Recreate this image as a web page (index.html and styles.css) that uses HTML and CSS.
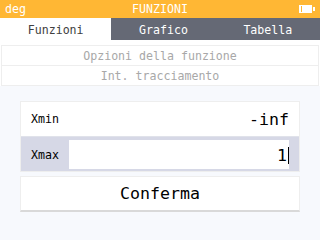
FILE: index.html
```html
<!DOCTYPE HTML>
<html>

<head>
  <title>Funzioni</title>
  <meta name="viewport" content="width=device-width, initial-scale=1.0">
  <link rel="stylesheet" href="styles.css">
</head>

<body>
  <div class="titlebar">
    <span class="angle">deg</span>
    <span class="title">FUNZIONI</span>
    <svg class="battery" width="16" height="8" viewBox="0 0 16 8">
      <rect x="0" y="0" width="2" height="8" fill="#fff" />
      <rect x="3" y="0" width="10" height="8" fill="#fff" />
      <rect x="0" y="0" width="13" height="1" fill="#fff" />
      <rect x="0" y="7" width="13" height="1" fill="#fff" />
      <rect x="14" y="2" width="2" height="4" fill="#fff" />
    </svg>
  </div>

  <!-- -------------------------------------------------------------------- -->

  <div class="tabs">
    <div class="tab active">Funzioni</div>
    <div class="tab">Grafico</div>
    <div class="tab">Tabella</div>
  </div>

  <!-- -------------------------------------------------------------------- -->

  <div class="menu">
    <div class="menu-row">Opzioni della funzione</div>
    <div class="menu-row">Int. tracciamento</div>
  </div>

  <div class="content">
    <div class="params">
      <div class="param">
        <span class="label">Xmin</span>
        <span class="value">-inf</span>
      </div>
      <div class="param editing">
        <span class="label">Xmax</span>
        <div class="field">1<span class="cursor"></span></div>
      </div>
    </div>
    <div class="confirm">Conferma</div>
  </div>
</body>

</html>
```

FILE: styles.css
```css
* {
  box-sizing: border-box;
}

html {
  font-family: "DejaVu Sans Mono", monospace;
}

body {
  margin: 0;
  width: 320px;
  height: 240px;
  overflow: hidden;
  background-color: #F7F9FD;
}

/* ------------------------------ TITLE BAR ---------------------------- */

.titlebar {
  position: relative;
  height: 18px;
  display: flex;
  align-items: center;
  justify-content: center;
  background-color: #FFB734;
  color: white;
  font-size: 11.6px;
}

.angle {
  position: absolute;
  left: 5px;
  top: 2px;
}

.battery {
  position: absolute;
  left: 299px;
  top: 5px;
}

/* -------------------------------- TABS ------------------------------- */

.tabs {
  display: flex;
  height: 22px;
  background-color: #656975;
  color: white;
  font-size: 11.6px;
}

.tab {
  flex: 1 1 auto;
  display: flex;
  align-items: center;
  justify-content: center;
  padding-top: 1px;
}

.tab.active {
  background-color: white;
  color: #404040;
}

/* -------------------------------- MENU ------------------------------- */

.menu {
  background-color: white;
  padding: 5px 1px 0;
}

.menu-row {
  height: 20px;
  border: 1px solid #EEEEEE;
  border-bottom: none;
  display: flex;
  align-items: center;
  justify-content: center;
  color: #A8A8A8;
  font-size: 11.6px;
}

.menu-row:last-child {
  height: 21px;
  border-bottom: 1px solid #EEEEEE;
}

/* ------------------------------- PARAMS ------------------------------ */

.content {
  padding: 15px 20px 0 20px;
}

.params {
  width: 280px;
  border: 1px solid #EEEEEE;
  background-color: white;
}

.param {
  height: 34px;
  display: flex;
  align-items: center;
  justify-content: space-between;
  padding: 0 10px;
  font-size: 11.6px;
  color: black;
}

.param + .param {
  height: 35px;
  border-top: 1px solid #E0E2EA;
}

.value {
  font-size: 16.6px;
  padding-top: 1px;
}

.param.editing {
  background-color: #D6D8E6;
  align-items: stretch;
  padding: 3px 10px 2px 10px;
}

.param.editing .label {
  display: flex;
  align-items: center;
  width: 38px;
}

.field {
  flex: 1;
  background-color: white;
  display: flex;
  align-items: center;
  justify-content: flex-end;
  font-size: 16.6px;
  padding-top: 1px;
}

.cursor {
  display: inline-block;
  width: 1px;
  height: 17px;
  margin-left: 1px;
  background-color: black;
}

/* ------------------------------- BUTTON ------------------------------ */

.confirm {
  width: 280px;
  height: 36px;
  margin-top: 4px;
  border: 1px solid #EEEEEE;
  border-bottom: 2px solid #D9D9D9;
  background-color: white;
  display: flex;
  align-items: center;
  justify-content: center;
  font-size: 16.6px;
  color: black;
}
```
